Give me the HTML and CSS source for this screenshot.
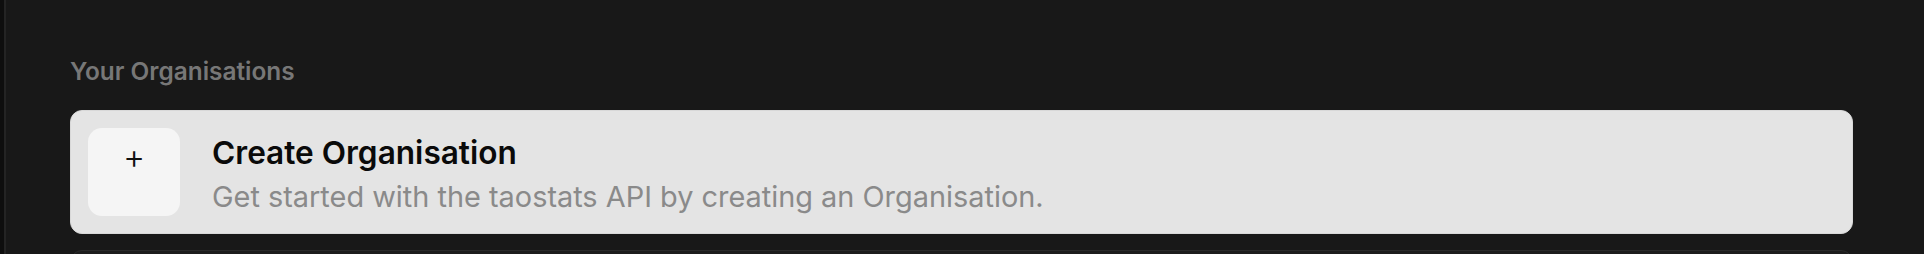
FILE: index.html
```html
<!DOCTYPE html>
<html lang="en">
<head>
    <meta charset="UTF-8">
    <meta name="viewport" content="width=device-width, initial-scale=1.0">
    <title>Organisations - taostats</title>
    <link rel="stylesheet" href="styles.css">
</head>
<body>

    <div class="pagina">
        <div class="lateral"></div>

        <div class="conteudo">
            <h2 class="titulo-secao">Your Organisations</h2>

            <div class="lista">
                <div class="cartao criar">
                    <div class="icone">+</div>
                    <div class="texto">
                        <div class="nome">Create Organisation</div>
                        <div class="descricao">Get started with the taostats API by creating an Organisation.</div>
                    </div>
                </div>

                <div class="cartao escuro"></div>
            </div>
        </div>
    </div>

</body>
</html>
```

FILE: styles.css
```css
* {
    margin: 0;
    padding: 0;
    box-sizing: border-box;
    font-family: Inter, "Noto Sans", sans-serif;
}

body {
    background: #181818;
    height: 254px;
    overflow: hidden;
}

.pagina {
    display: flex;
    height: 100%;
}

.lateral {
    width: 6px;
    background: #0e0e0e;
    border-right: 2px solid #242424;
}

.conteudo {
    flex: 1;
    padding: 55px 71px 0 64px;
}

.titulo-secao {
    font-size: 24.4px;
    line-height: 32px;
    font-weight: 600;
    color: #777;
    margin-bottom: 23px;
}

.lista {
    display: flex;
    flex-direction: column;
    gap: 16px;
}

.cartao {
    border-radius: 12px;
}

.criar {
    display: flex;
    gap: 32px;
    padding: 17px;
    background: #e4e4e4;
    border: 1px solid #d8d8d8;
}

.icone {
    width: 92px;
    height: 88px;
    flex-shrink: 0;
    background: #f5f5f5;
    border-radius: 14px;
    text-align: center;
    font-size: 34px;
    line-height: 58px;
    font-weight: 300;
    color: #111;
}

.texto {
    padding-top: 5px;
}

.nome {
    font-size: 31.6px;
    line-height: 40px;
    font-weight: 600;
    color: #0a0a0a;
}

.descricao {
    margin-top: 7px;
    font-size: 28.9px;
    line-height: 34px;
    color: #8a8a8a;
}

.escuro {
    height: 24px;
    background: #1c1c1c;
    border: 1px solid #2a2a2a;
}
```
